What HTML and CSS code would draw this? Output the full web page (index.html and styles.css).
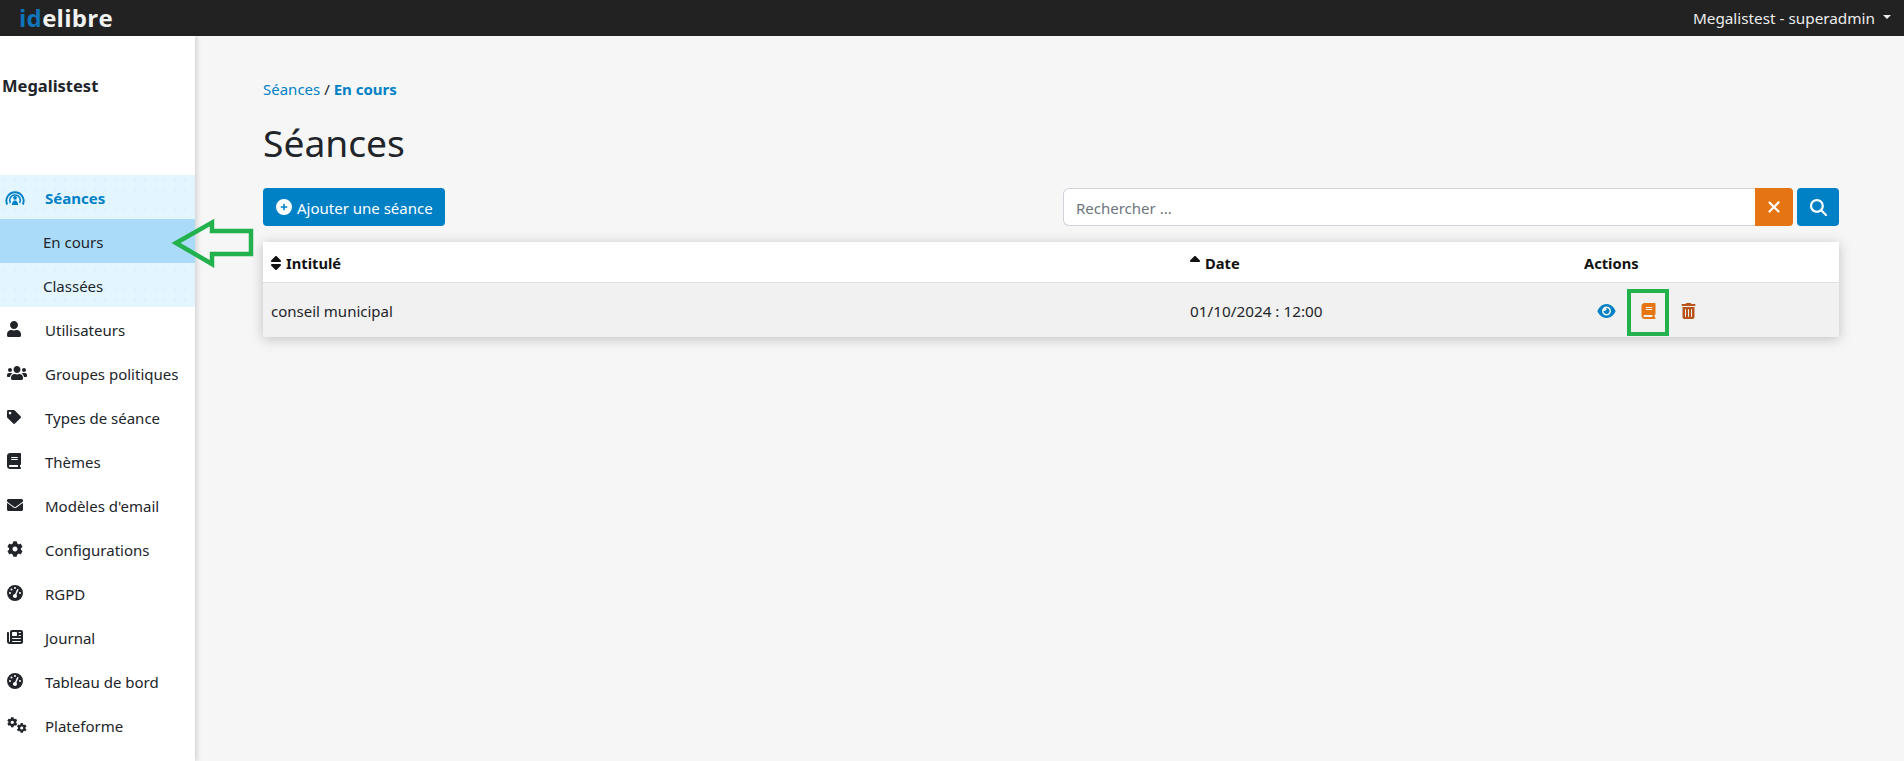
FILE: index.html
```html
<!DOCTYPE html>
<html lang="fr">
<head>
<meta charset="utf-8">
<title>Séances</title>
<link rel="stylesheet" href="styles.css">
</head>
<body>
<svg class="defs" width="0" height="0" aria-hidden="true">
  <defs>
    <path id="cog" d="M487.4 315.7l-42.6-24.6c4.3-23.2 4.3-47 0-70.2l42.6-24.6c4.9-2.8 7.1-8.6 5.5-14-11.1-35.6-30-67.8-54.7-94.6-3.8-4.1-10-5.1-14.8-2.3L380.8 110c-17.9-15.4-38.5-27.3-60.8-35.1V25.8c0-5.6-3.9-10.5-9.4-11.7-36.7-8.2-74.3-7.8-109.2 0-5.5 1.2-9.4 6.1-9.4 11.7V75c-22.2 7.9-42.8 19.8-60.8 35.1L88.7 85.5c-4.9-2.8-11-1.9-14.8 2.3-24.7 26.7-43.6 58.9-54.7 94.6-1.7 5.4.6 11.2 5.5 14L67.3 221c-4.3 23.2-4.3 47 0 70.2l-42.6 24.6c-4.9 2.8-7.1 8.6-5.5 14 11.1 35.6 30 67.8 54.7 94.6 3.8 4.1 10 5.1 14.8 2.3l42.6-24.6c17.9 15.4 38.5 27.3 60.8 35.1v49.2c0 5.6 3.9 10.5 9.4 11.7 36.7 8.2 74.3 7.8 109.2 0 5.5-1.2 9.4-6.1 9.4-11.7v-49.2c22.2-7.9 42.8-19.8 60.8-35.1l42.6 24.6c4.9 2.8 11 1.9 14.8-2.3 24.7-26.7 43.6-58.9 54.7-94.6 1.5-5.5-.7-11.3-5.6-14.1zM256 336c-44.1 0-80-35.9-80-80s35.9-80 80-80 80 35.9 80 80-35.9 80-80 80z"/>
    <path id="gauge" d="M0 256a256 256 0 1 1 512 0A256 256 0 1 1 0 256zM288 96a32 32 0 1 0 -64 0 32 32 0 1 0 64 0zM256 416c35.3 0 64-28.7 64-64c0-17.4-6.9-33.1-18.1-44.6L366 161.7c5.3-12.1-.2-26.3-12.3-31.6s-26.3 .2-31.6 12.3L257.9 288c-.6 0-1.3 0-1.9 0c-35.3 0-64 28.7-64 64s28.7 64 64 64zM176 144a32 32 0 1 0 -64 0 32 32 0 1 0 64 0zM96 288a32 32 0 1 0 0-64 32 32 0 1 0 0 64zm352-32a32 32 0 1 0 -64 0 32 32 0 1 0 64 0z"/>
    <path id="book" d="M96 0C43 0 0 43 0 96V416c0 53 43 96 96 96H384h32c17.7 0 32-14.3 32-32s-14.3-32-32-32V384c17.7 0 32-14.3 32-32V32c0-17.7-14.3-32-32-32H384 96zm0 384H352v64H96c-17.7 0-32-14.3-32-32s14.3-32 32-32zm32-240c0-8.8 7.2-16 16-16H336c8.8 0 16 7.2 16 16s-7.2 16-16 16H144c-8.8 0-16-7.2-16-16zm16 48H336c8.8 0 16 7.2 16 16s-7.2 16-16 16H144c-8.8 0-16-7.2-16-16s7.2-16 16-16z"/>
  </defs>
</svg>

<header class="topbar">
  <a class="logo"><span class="logo-id">id</span>elibre</a>
  <a class="user-menu">Megalistest - superadmin<span class="caret"></span></a>
</header>

<div class="shell">
  <aside class="sidebar">
    <div class="structure">Megalistest</div>
    <nav class="menu">
      <div class="group">
        <a class="item item-active">
          <svg class="ico ico-seance" viewBox="0 0 20 15"><g fill="none" stroke="currentColor"><path stroke-width="1.9" d="M2.200 14.500A8.600 8.600 0 1 1 17.800 14.500"/><path stroke-width="1.600" d="M5.300 13A5.400 5.400 0 1 1 14.700 13"/></g><circle cx="10" cy="7.800" r="1.900" fill="currentColor"/><path d="M6.800 15c.3-3 1.500-4.500 3.200-4.500s2.900 1.500 3.200 4.500z" fill="currentColor"/></svg>
          <span>Séances</span>
        </a>
        <a class="sub sub-current"><span>En cours</span></a>
        <a class="sub"><span>Classées</span></a>
      </div>
      <a class="item"><svg class="ico" viewBox="0 0 448 512"><path d="M224 256c70.7 0 128-57.3 128-128S294.700 0 224 0 96 57.300 96 128s57.300 128 128 128zm89.600 32h-16.700c-22.200 10.200-46.900 16-72.900 16s-50.600-5.800-72.900-16h-16.700C60.200 288 0 348.200 0 422.400V464c0 26.500 21.500 48 48 48h352c26.500 0 48-21.500 48-48v-41.600c0-74.200-60.200-134.400-134.400-134.400z"/></svg><span>Utilisateurs</span></a>
      <a class="item"><svg class="ico" viewBox="0 0 640 512"><path d="M96 224c35.300 0 64-28.700 64-64s-28.700-64-64-64-64 28.700-64 64 28.700 64 64 64zm448 0c35.300 0 64-28.700 64-64s-28.700-64-64-64-64 28.700-64 64 28.700 64 64 64zm32 32h-64c-17.600 0-33.500 7.100-45.100 18.600 40.300 22.100 68.900 62 75.100 109.400h66c17.700 0 32-14.300 32-32v-32c0-35.300-28.700-64-64-64zm-256 0c61.900 0 112-50.100 112-112S381.900 32 320 32 208 82.100 208 144s50.100 112 112 112zm76.800 32h-8.300c-20.800 10-43.900 16-68.500 16s-47.600-6-68.500-16h-8.300C179.600 288 128 339.600 128 403.200V432c0 26.500 21.500 48 48 48h288c26.500 0 48-21.500 48-48v-28.800c0-63.600-51.600-115.200-115.200-115.200zm-223.700-13.400C161.500 263.100 145.600 256 128 256H64c-35.300 0-64 28.700-64 64v32c0 17.700 14.300 32 32 32h65.900c6.300-47.400 34.900-87.300 75.200-109.400z"/></svg><span>Groupes politiques</span></a>
      <a class="item"><svg class="ico ico-tag" viewBox="0 0 512 512"><path d="M0 252.118V48C0 21.490 21.490 0 48 0h204.118a48 48 0 0 1 33.941 14.059l211.882 211.882c18.745 18.745 18.745 49.137 0 67.882L293.823 497.941c-18.745 18.745-49.137 18.745-67.882 0L14.059 286.059A48 48 0 0 1 0 252.118zM112 64c-26.510 0-48 21.490-48 48s21.490 48 48 48 48-21.490 48-48-21.490-48-48-48z"/></svg><span>Types de séance</span></a>
      <a class="item"><svg class="ico" viewBox="0 0 448 512"><use href="#book"/></svg><span>Thèmes</span></a>
      <a class="item"><svg class="ico" viewBox="0 0 512 512"><path d="M502.300 190.800c3.900-3.100 9.700-.2 9.700 4.700V400c0 26.500-21.500 48-48 48H48c-26.500 0-48-21.500-48-48V195.600c0-5 5.700-7.800 9.700-4.700 22.400 17.400 52.100 39.500 154.100 113.600 21.100 15.400 56.700 47.800 92.200 47.600 35.700.3 72-32.800 92.300-47.600 102-74.100 131.600-96.300 154-113.700zM256 320c23.200.4 56.600-29.200 73.400-41.400 132.700-96.300 142.800-104.700 173.400-128.700 5.800-4.500 9.200-11.500 9.200-18.900v-19c0-26.500-21.500-48-48-48H48C21.500 64 0 85.500 0 112v19c0 7.400 3.400 14.300 9.200 18.900 30.600 23.900 40.700 32.400 173.400 128.700 16.800 12.200 50.200 41.800 73.400 41.400z"/></svg><span>Modèles d'email</span></a>
      <a class="item"><svg class="ico" viewBox="0 0 512 512"><use href="#cog"/></svg><span>Configurations</span></a>
      <a class="item"><svg class="ico" viewBox="0 0 512 512"><use href="#gauge"/></svg><span>RGPD</span></a>
      <a class="item"><svg class="ico" viewBox="0 0 512 512"><path d="M96 96c0-35.300 28.700-64 64-64H448c35.300 0 64 28.700 64 64V416c0 35.300-28.700 64-64 64H80c-44.200 0-80-35.800-80-80V128c0-17.700 14.300-32 32-32s32 14.300 32 32V400c0 8.800 7.200 16 16 16s16-7.200 16-16V96zm64 24v80c0 13.300 10.700 24 24 24H296c13.300 0 24-10.700 24-24V120c0-13.300-10.700-24-24-24H184c-13.300 0-24 10.700-24 24zm208-8c0 8.800 7.200 16 16 16h48c8.800 0 16-7.200 16-16s-7.200-16-16-16H384c-8.800 0-16 7.200-16 16zm0 96c0 8.800 7.200 16 16 16h48c8.800 0 16-7.200 16-16s-7.200-16-16-16H384c-8.800 0-16 7.200-16 16zM160 304c0 8.800 7.200 16 16 16H432c8.800 0 16-7.200 16-16s-7.200-16-16-16H176c-8.800 0-16 7.200-16 16zm0 96c0 8.800 7.200 16 16 16H432c8.800 0 16-7.200 16-16s-7.200-16-16-16H176c-8.800 0-16 7.200-16 16z"/></svg><span>Journal</span></a>
      <a class="item"><svg class="ico" viewBox="0 0 512 512"><use href="#gauge"/></svg><span>Tableau de bord</span></a>
      <a class="item"><svg class="ico" viewBox="0 0 640 512"><use href="#cog" transform="scale(.66)"/><use href="#cog" transform="translate(310 190) scale(.63)"/></svg><span>Plateforme</span></a>
    </nav>
  </aside>

  <main class="content">
    <div class="crumbs"><a class="crumb-link">Séances</a> / <strong class="crumb-here">En cours</strong></div>
    <h1 class="title">Séances</h1>
    <div class="toolbar">
      <a class="btn-add"><svg class="add-ico" viewBox="0 0 512 512"><path d="M256 512A256 256 0 1 0 256 0a256 256 0 1 0 0 512zM232 344V280H168c-13.300 0-24-10.700-24-24s10.700-24 24-24h64V168c0-13.300 10.700-24 24-24s24 10.700 24 24v64h64c13.300 0 24 10.700 24 24s-10.700 24-24 24H280v64c0 13.300-10.700 24-24 24s-24-10.700-24-24z"/></svg><span>Ajouter une séance</span></a>
      <form class="search">
        <input class="search-input" type="text" placeholder="Rechercher ...">
        <button class="btn-clear" type="button"><svg viewBox="0 0 384 512"><path d="M342.600 150.600c12.500-12.500 12.500-32.800 0-45.300s-32.800-12.500-45.300 0L192 210.700 86.600 105.400c-12.500-12.500-32.800-12.500-45.300 0s-12.500 32.800 0 45.300L146.700 256 41.400 361.400c-12.500 12.500-12.500 32.800 0 45.300s32.800 12.500 45.300 0L192 301.300 297.400 406.600c12.500 12.500 32.800 12.500 45.300 0s12.500-32.800 0-45.300L237.300 256 342.600 150.600z"/></svg></button>
        <button class="btn-search" type="button"><svg viewBox="0 0 512 512"><path d="M416 208c0 45.900-14.900 88.300-40 122.700L502.600 457.400c12.500 12.500 12.500 32.800 0 45.300s-32.800 12.500-45.300 0L330.700 376c-34.400 25.200-76.800 40-122.700 40C93.100 416 0 322.900 0 208S93.100 0 208 0S416 93.100 416 208zM208 352a144 144 0 1 0 0-288 144 144 0 1 0 0 288z"/></svg></button>
      </form>
    </div>
    <div class="table-card">
      <div class="row row-head">
        <div class="col-name"><svg class="sort" viewBox="0 0 320 512"><path d="M137.400 41.400c12.500-12.500 32.800-12.500 45.300 0l128 128c9.200 9.200 11.900 22.900 6.900 34.900s-16.600 19.800-29.600 19.800H32c-12.900 0-24.600-7.800-29.600-19.800s-2.200-25.700 6.900-34.900l128-128zm0 429.300l-128-128c-9.200-9.200-11.900-22.900-6.900-34.900s16.600-19.800 29.600-19.800H288c12.900 0 24.600 7.800 29.600 19.800s2.200 25.700-6.900 34.900l-128 128c-12.500 12.500-32.800 12.500-45.300 0z"/></svg>Intitulé</div>
        <div class="col-date"><svg class="sort" viewBox="0 0 320 512"><path d="M137.400 41.400c12.500-12.500 32.800-12.500 45.300 0l128 128c9.200 9.200 11.900 22.900 6.900 34.900s-16.600 19.800-29.600 19.800H32c-12.900 0-24.600-7.800-29.600-19.800s-2.200-25.700 6.900-34.900l128-128z"/></svg>Date</div>
        <div class="col-actions">Actions</div>
      </div>
      <div class="row row-body">
        <div class="col-name">conseil municipal</div>
        <div class="col-date col-datetime">01/10/2024 : 12:00</div>
        <div class="col-actions actions">
          <svg class="act act-eye" viewBox="0 0 576 512"><path d="M288 32c-80.800 0-145.500 36.800-192.600 80.600C48.600 156 17.300 208 2.500 243.700c-3.300 7.900-3.300 16.700 0 24.600C17.300 304 48.600 356 95.400 399.400C142.500 443.200 207.200 480 288 480s145.500-36.800 192.600-80.600c46.800-43.500 78.100-95.400 93-131.100c3.300-7.900 3.300-16.700 0-24.600c-14.900-35.700-46.200-87.700-93-131.100C433.500 68.800 368.800 32 288 32zM144 256a144 144 0 1 1 288 0 144 144 0 1 1 -288 0zm144-64c0 35.300-28.700 64-64 64c-7.100 0-13.900-1.200-20.300-3.300c-5.500-1.800-11.900 1.600-11.700 7.400c.3 6.900 1.300 13.800 3.200 20.700c13.700 51.200 66.400 81.600 117.600 67.900s81.600-66.400 67.900-117.600c-11.100-41.500-47.800-69.400-88.600-71.100c-5.800-.2-9.200 6.100-7.400 11.700c2.100 6.400 3.300 13.200 3.300 20.300z"/></svg>
          <svg class="act act-book" viewBox="0 0 448 512"><use href="#book"/></svg>
          <svg class="act act-trash" viewBox="0 0 448 512"><path d="M135.200 17.700C140.600 6.800 151.700 0 163.800 0H284.200c12.100 0 23.200 6.800 28.600 17.700L320 32h96c17.700 0 32 14.300 32 32s-14.300 32-32 32H32C14.300 96 0 81.700 0 64S14.300 32 32 32h96l7.200-14.300zM32 128H416V448c0 35.300-28.700 64-64 64H96c-35.300 0-64-28.700-64-64V128zm96 64c-8.800 0-16 7.200-16 16V432c0 8.800 7.200 16 16 16s16-7.200 16-16V208c0-8.800-7.200-16-16-16zm96 0c-8.800 0-16 7.200-16 16V432c0 8.800 7.200 16 16 16s16-7.200 16-16V208c0-8.800-7.200-16-16-16zm96 0c-8.800 0-16 7.200-16 16V432c0 8.800 7.200 16 16 16s16-7.200 16-16V208c0-8.800-7.200-16-16-16z"/></svg>
        </div>
      </div>
    </div>
  </main>
</div>

<svg class="note-arrow" viewBox="0 0 90 52" aria-hidden="true"><path d="M5 26 L41 5.500 V14 H80 V37 H41 V47 Z"/></svg>
<div class="note-box"></div>
</body>
</html>
```
FILE: styles.css
```css
* { box-sizing: border-box; }
html, body { height: 100%; }
body {
  margin: 0;
  font-family: "Noto Sans", "Open Sans", sans-serif;
  font-size: 15px;
  color: #212529;
  background: #f6f6f6;
  overflow: hidden;
}
.defs { position: absolute; }
.topbar {
  height: 36px;
  background: #222222;
  display: flex;
  align-items: center;
  justify-content: space-between;
  padding: 0 13px 0 19px;
}
.logo {
  font-family: "Open Sans", sans-serif;
  font-weight: 700;
  font-size: 24px;
  letter-spacing: 0.3px;
  color: #f2f2f2;
  line-height: 36px;
}
.logo-id { color: #0f75bc; }
.user-menu { color: #ececec; font-size: 15.3px; display: flex; align-items: center; }
.caret {
  margin-left: 8px;
  margin-bottom: 3px;
  border-top: 4.5px solid #ececec;
  border-left: 4.5px solid transparent;
  border-right: 4.5px solid transparent;
}
.shell { display: flex; height: 725px; }
.sidebar {
  width: 195px;
  flex: none;
  background: #fff;
  box-shadow: 2px 0 5px rgba(0,0,0,.15);
}
.structure {
  font-weight: 700;
  font-size: 16.5px;
  color: #212529;
  padding: 39px 0 0 2px;
  height: 139px;
  line-height: 22px;
}
.group {
  background-color: #e3f5ff;
  background-image: radial-gradient(circle, #d3e8f3 .6px, transparent .8px);
  background-size: 10px 10px;
}
.item, .sub {
  display: grid;
  align-items: center;
  height: 44px;
  color: #212529;
  font-size: 15px;
}
.item { grid-template-columns: 38px 1fr; padding-left: 7px; }
.item > span, .sub > span { padding-top: 2px; }
.ico { height: 16px; width: auto; fill: currentColor; justify-self: start; }
.ico-tag { height: 14px; }
.ico-seance { margin-left: -2px; height: 15px; }
.item-active { color: #0081c6; font-weight: 700; }
.sub { padding-left: 43px; }
.sub-current { background: #aadcf9; }
.content { flex: 1; padding: 41px 65px 0 68px; min-width: 0; }
.crumbs { font-size: 15px; line-height: 24px; }
.crumb-link { color: #0081c6; }
.crumb-here { color: #0081c6; }
.title {
  font-weight: 400;
  font-size: 37.2px;
  line-height: 52px;
  margin: 16px 0 19px;
}
.toolbar { display: flex; justify-content: space-between; align-items: stretch; height: 38px; }
.btn-add {
  width: 182px;
  background: #0081c6;
  color: #fff;
  border-radius: 4px;
  display: flex;
  align-items: center;
  padding-left: 13px;
  font-size: 15px;
}
.btn-add span { padding-top: 2px; }
.add-ico { width: 16px; height: 16px; fill: #fff; margin-right: 5px; }
.search { display: flex; width: 776px; margin: 0; }
.search-input {
  flex: 1;
  min-width: 0;
  border: 1px solid #ced4da;
  border-right: 0;
  border-radius: 6px 0 0 6px;
  padding: 2px 12px 0;
  background: #fff;
  font: inherit;
  color: #212529;
  outline: none;
}
.search-input::placeholder { color: #6c757d; opacity: 1; }
.btn-clear, .btn-search {
  border: 0;
  padding: 0;
  display: flex;
  align-items: center;
  justify-content: center;
  fill: #fff;
}
.btn-clear { width: 38px; background: #e57513; border-radius: 0 4px 4px 0; }
.btn-clear svg { width: 14px; height: 18px; }
.btn-search { width: 42px; margin-left: 4px; background: #0081c6; border-radius: 4px; }
.btn-search svg { width: 17px; height: 17px; }
.table-card {
  margin-top: 16px;
  background: #fff;
  box-shadow: 0 2px 12px rgba(0,0,0,.22);
}
.row { display: flex; align-items: center; padding-left: 8px; }
.row-head { height: 41px; font-weight: 700; font-size: 14.7px; border-bottom: 1px solid #dee2e6; color: #111; padding-top: 2px; }
.row-body { height: 54px; background: #f1f1f1; padding-top: 2px; }
.col-name { width: 919px; flex: none; }
.col-date { width: 394px; flex: none; }
.col-datetime { font-size: 15.3px; }
.col-actions { flex: 1; }
.sort { width: 10px; height: 16px; fill: #111; margin-right: 5px; vertical-align: -2px; }
.actions { display: flex; align-items: center; }
.act { height: 16px; }
.act-eye { width: 19px; fill: #0081c6; margin-left: 13px; }
.act-book { width: 15px; fill: #e57513; margin-left: 25px; }
.act-trash { width: 15px; fill: #b9531c; margin-left: 25px; }
.note-arrow {
  position: absolute;
  left: 171px;
  top: 217px;
  width: 90px;
  height: 52px;
  fill: none;
  stroke: #22b14c;
  stroke-width: 4.500px;
}
.note-box {
  position: absolute;
  left: 1627px;
  top: 289px;
  width: 42px;
  height: 47px;
  border: 4px solid #22b14c;
}
```
